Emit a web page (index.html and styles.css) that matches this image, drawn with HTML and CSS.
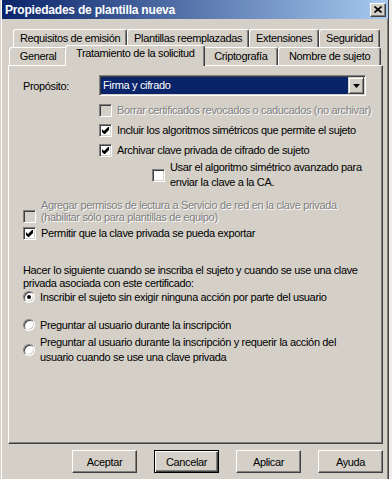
FILE: index.html
```html
<!DOCTYPE html>
<html lang="es">
<head>
  <meta charset="UTF-8">
  <title>Propiedades de plantilla nueva</title>
  <link rel="stylesheet" href="styles.css">
</head>
<body>

  <div class="window">
    <div class="titlebar">
      <span class="title">Propiedades de plantilla nueva</span>
      <span class="close">
        <svg width="8" height="7" viewBox="0 0 8 7"><path d="M0.5 0.5 L7.5 6.5 M7.5 0.5 L0.5 6.5" stroke="#000" stroke-width="1.7" fill="none"/></svg>
      </span>
    </div>

    <div class="tabs">
      <div class="tab-row back">
        <div class="tab">Requisitos de emisión</div>
        <div class="tab">Plantillas reemplazadas</div>
        <div class="tab">Extensiones</div>
        <div class="tab">Seguridad</div>
      </div>
      <div class="tab-row front">
        <div class="tab">General</div>
        <div class="tab active">Tratamiento de la solicitud</div>
        <div class="tab">Criptografía</div>
        <div class="tab">Nombre de sujeto</div>
      </div>
    </div>

    <div class="panel">
      <div class="purpose">
        <span class="purpose-label">Propósito:</span>
        <div class="combo">
          <span class="combo-value">Firma y cifrado</span>
          <span class="combo-btn">
            <svg width="7" height="4" viewBox="0 0 7 4"><polygon points="0,0 7,0 3.5,4" fill="#000"/></svg>
          </span>
        </div>
      </div>

      <div class="options">
        <div class="check disabled">
          <span class="box"></span>
          <span>Borrar certificados revocados o caducados (no archivar)</span>
        </div>
        <div class="check">
          <span class="box"><svg width="7" height="7" viewBox="0 0 7 7"><polygon points="0,2 2,4 6,0 7,0 7,3 3,7 2,7 0,5" fill="#000"/></svg></span>
          <span>Incluir los algoritmos simétricos que permite el sujeto</span>
        </div>
        <div class="check">
          <span class="box"><svg width="7" height="7" viewBox="0 0 7 7"><polygon points="0,2 2,4 6,0 7,0 7,3 3,7 2,7 0,5" fill="#000"/></svg></span>
          <span>Archivar clave privada de cifrado de sujeto</span>
        </div>
        <div class="check multi indented">
          <span class="box"></span>
          <span>Usar el algoritmo simétrico avanzado para<br>enviar la clave a la CA.</span>
        </div>
      </div>

      <div class="check disabled tight">
        <span class="box"></span>
        <span>Agregar permisos de lectura a Servicio de red en la clave privada<br>(habilitar sólo para plantillas de equipo)</span>
      </div>
      <div class="check">
        <span class="box"><svg width="7" height="7" viewBox="0 0 7 7"><polygon points="0,2 2,4 6,0 7,0 7,3 3,7 2,7 0,5" fill="#000"/></svg></span>
        <span>Permitir que la clave privada se pueda exportar</span>
      </div>

      <p class="note">Hacer lo siguiente cuando se inscriba el sujeto y cuando se use una clave<br>privada asociada con este certificado:</p>

      <div class="radio first">
        <span class="dot on"></span>
        <span>Inscribir el sujeto sin exigir ninguna acción por parte del usuario</span>
      </div>
      <div class="radio second">
        <span class="dot"></span>
        <span>Preguntar al usuario durante la inscripción</span>
      </div>
      <div class="radio multi third">
        <span class="dot"></span>
        <span>Preguntar al usuario durante la inscripción y requerir la acción del<br>usuario cuando se use una clave privada</span>
      </div>
    </div>

    <div class="buttons">
      <button class="btn">Aceptar</button>
      <button class="btn default">Cancelar</button>
      <button class="btn">Aplicar</button>
      <button class="btn">Ayuda</button>
    </div>
  </div>

</body>
</html>
```

FILE: styles.css
```css
html, body {
  height: 479px;
  overflow: hidden;
}

body {
  margin: 0;
  background: #eeede9;
  font-family: "Liberation Sans", Arial, sans-serif;
  font-size: 11px;
  letter-spacing: -0.35px;
  color: #000;
}

.window {
  box-sizing: border-box;
  width: 389px;
  height: 479px;
  background: #d4d0c8;
  border-left: 1px solid #d4d0c8;
  border-right: 1px solid #404040;
  padding-left: 1px;
  box-shadow: inset 1px 0 #fff, inset -1px 0 #808080;
}

/* title bar */
.titlebar {
  height: 19px;
  display: flex;
  align-items: center;
  justify-content: space-between;
  padding: 0 2px 0 3px;
  background: linear-gradient(to right, #0a246a, #a6caf0);
}

.title {
  color: #fff;
  font-weight: bold;
  font-size: 12px;
  letter-spacing: -0.2px;
}

.close {
  box-sizing: border-box;
  width: 16px;
  height: 14px;
  display: flex;
  align-items: center;
  justify-content: center;
  background: #d4d0c8;
  border: 1px solid;
  border-color: #fff #404040 #404040 #fff;
  box-shadow: inset -1px -1px #808080;
}

/* tabs */
.tabs {
  margin-top: 10px;
}

.tab-row {
  display: flex;
  align-items: flex-start;
}

.tab-row.back {
  margin: 0 8px 0 11px;
}

.tab-row.front {
  margin: 0 7px 0 7px;
}

.tab {
  flex: 1 1 auto;
  box-sizing: border-box;
  height: 18px;
  padding: 0 5px;
  line-height: 16px;
  text-align: center;
  white-space: nowrap;
  background: #d4d0c8;
  border-top: 1px solid #fff;
  border-left: 1px solid #fff;
  border-right: 1px solid #404040;
  border-radius: 3px 3px 0 0;
  box-shadow: inset -1px 0 #808080;
}

.tab.active {
  position: relative;
  z-index: 1;
  height: 21px;
  margin: -2px -2px -1px;
  line-height: 15px;
}

/* main panel */
.panel {
  box-sizing: border-box;
  height: 379px;
  margin: 0 5px 0 6px;
  padding: 9px 10px 0 14px;
  border: 1px solid;
  border-color: #fff #404040 #404040 #fff;
  box-shadow: inset -1px -1px #808080;
}

.purpose {
  display: flex;
  align-items: center;
  height: 21px;
}

.purpose-label {
  width: 76px;
}

.combo {
  box-sizing: border-box;
  width: 267px;
  height: 21px;
  display: flex;
  background: #fff;
  border: 1px solid;
  border-color: #808080 #fff #fff #808080;
  box-shadow: inset 1px 1px #404040, inset -1px -1px #d4d0c8;
  padding: 1px;
}

.combo-value {
  flex: 1;
  background: #0a246a;
  color: #fff;
  padding-left: 2px;
  line-height: 17px;
}

.combo-btn {
  box-sizing: border-box;
  width: 16px;
  display: flex;
  align-items: center;
  justify-content: center;
  background: #d4d0c8;
  border: 1px solid;
  border-color: #d4d0c8 #404040 #404040 #d4d0c8;
  box-shadow: inset 1px 1px #fff, inset -1px -1px #808080;
}

/* check boxes */
.options {
  margin: 4px 0 0 76px;
}

.check {
  display: flex;
  align-items: center;
  gap: 5px;
  height: 20px;
  white-space: nowrap;
}

.check.multi {
  height: auto;
  line-height: 15px;
}

.check.indented {
  margin-left: 53px;
}

.check.tight {
  height: auto;
  margin-top: 9px;
  line-height: 12px;
}

.check.tight .box {
  align-self: flex-end;
}

.box {
  box-sizing: border-box;
  flex: none;
  width: 13px;
  height: 13px;
  display: flex;
  align-items: center;
  justify-content: center;
  background: #fff;
  border: 1px solid;
  border-color: #808080 #fff #fff #808080;
  box-shadow: inset 1px 1px #404040, inset -1px -1px #d4d0c8;
}

.disabled {
  color: #808080;
  text-shadow: 1px 1px 0 #fff;
}

.disabled .box {
  background: #d4d0c8;
}

.note {
  margin: 21px 0 0;
  line-height: 13px;
  white-space: nowrap;
}

/* radio buttons */
.radio {
  display: flex;
  align-items: center;
  gap: 5px;
  height: 14px;
  white-space: nowrap;
}

.radio.second {
  margin-top: 14px;
}

.radio.third {
  margin-top: 3px;
  height: auto;
  line-height: 15px;
}

.dot {
  box-sizing: border-box;
  flex: none;
  width: 12px;
  height: 12px;
  display: flex;
  align-items: center;
  justify-content: center;
  border-radius: 50%;
  background: #fff;
  border: 1px solid;
  border-color: #808080 #fff #fff #808080;
  box-shadow: inset 1px 1px #404040, inset -1px -1px #d4d0c8;
}

.dot.on::after {
  content: "";
  width: 4px;
  height: 4px;
  border-radius: 50%;
  background: #000;
}

/* dialog buttons */
.buttons {
  display: flex;
  justify-content: flex-end;
  gap: 17px;
  margin: 6px 5px 0 0;
}

.btn {
  box-sizing: border-box;
  width: 65px;
  height: 23px;
  padding: 0;
  font: inherit;
  letter-spacing: inherit;
  color: #000;
  background: #d4d0c8;
  border: 1px solid;
  border-color: #fff #404040 #404040 #fff;
  box-shadow: inset -1px -1px #808080;
}

.btn.default {
  border: 1px solid #000;
  box-shadow: inset 1px 1px #fff, inset -1px -1px #404040, inset -2px -2px #808080;
}
```
